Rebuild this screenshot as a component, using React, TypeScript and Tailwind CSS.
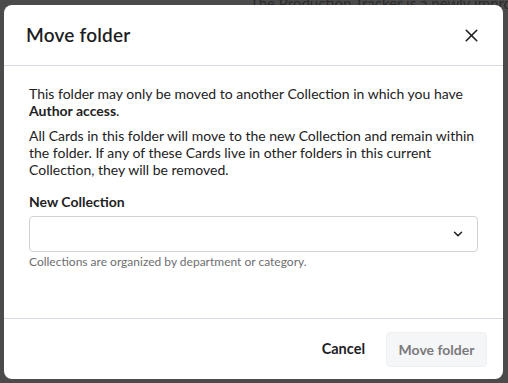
import React from 'react';
import { X, ChevronDown } from 'lucide-react';

export default function App() {
    return (
        <div
            className="relative w-[508px] h-[383px] overflow-hidden bg-[#4b4b4c]"
            style={{ fontFamily: 'Lato, "Open Sans", sans-serif' }}
        >
            {/* Page behind the overlay */}
            <div className="absolute left-[250px] -top-[8px] text-[15px] text-[#2c2c2d] whitespace-nowrap">
                The Production Tracker is a newly improved
            </div>

            {/* Dialog */}
            <div className="absolute left-[4px] top-[5px] w-[499px] h-[374px] bg-white rounded-lg flex flex-col">
                {/* Header */}
                <div className="h-[61px] flex items-center justify-between pl-[22px] pr-[21px] border-b border-[#d5dbe1]">
                    <h2 className="text-[19px] font-semibold text-[#1d1d1f] tracking-[0.2px]">Move folder</h2>
                    <X size={21} strokeWidth={1.8} className="text-[#1d1d1f]" />
                </div>

                {/* Body */}
                <div className="flex-1 px-[25px] pt-[19px] text-[14px] leading-[17px] text-[#222]">
                    <p>
                        This folder may only be moved to another Collection in which you have{' '}
                        <span className="font-bold">Author access</span>.
                    </p>
                    <p className="mt-[8px]">
                        All Cards in this folder will move to the new Collection and remain within the
                        folder. If any of these Cards live in other folders in this current Collection,
                        they will be removed.
                    </p>

                    <div className="mt-[15px] font-bold">New Collection</div>
                    <div className="mt-[6px] h-[36px] border border-[#cfd3d8] rounded-[4px] flex items-center justify-end pr-[12px]">
                        <ChevronDown size={14} strokeWidth={2.6} className="text-[#222]" />
                    </div>
                    <div className="mt-[2px] text-[12px] leading-[15px] text-[#6e6e70]">
                        Collections are organized by department or category.
                    </div>
                </div>

                {/* Footer */}
                <div className="h-[61px] border-t border-[#d5dbe1] flex items-center justify-end gap-[20px] pr-[16px]">
                    <button className="text-[14.5px] font-bold text-[#1d1d1f] px-[1px]">Cancel</button>
                    <button className="h-[35px] w-[101px] rounded-[4px] bg-[#f5f6f7] border border-[#eef0f2] text-[14px] font-bold text-[#7a7a7c]">
                        Move folder
                    </button>
                </div>
            </div>
        </div>
    );
}
